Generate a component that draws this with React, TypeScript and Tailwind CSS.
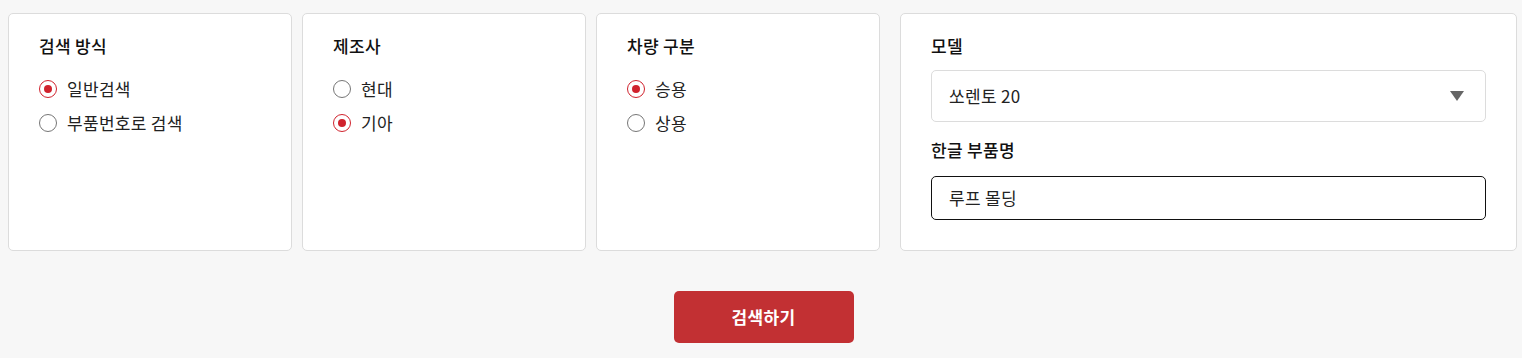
import { useState } from "react";

const font = { fontFamily: '"Noto Sans CJK KR", "Noto Sans", sans-serif' };

interface RadioGroupProps {
  title: string;
  options: string[];
  value: string;
  onChange: (v: string) => void;
}

function RadioGroup({ title, options, value, onChange }: RadioGroupProps) {
  return (
    <div className="w-[284px] shrink-0 rounded-[5px] border border-[#dcdcdc] bg-white px-[30px] pt-[20px]">
      <p className="text-[17px] leading-6 font-medium tracking-[0.3px] text-[#111]">{title}</p>
      <div className="mt-[19px] flex flex-col gap-[10px]">
        {options.map((opt) => {
          const checked = opt === value;
          return (
            <label
              key={opt}
              className="flex h-6 cursor-pointer items-center gap-[10px] text-[17px] tracking-[0.3px] text-[#222]"
              onClick={() => onChange(opt)}
            >
              <span
                className={
                  checked
                    ? "flex h-[18px] w-[18px] items-center justify-center rounded-full border-[1.5px] border-[#d0222d]"
                    : "flex h-[18px] w-[18px] items-center justify-center rounded-full border-[1.5px] border-[#767676]"
                }
              >
                {checked && <span className="h-[8px] w-[8px] rounded-full bg-[#d0222d]" />}
              </span>
              <span>{opt}</span>
            </label>
          );
        })}
      </div>
    </div>
  );
}

export default function App() {
  const [method, setMethod] = useState("일반검색");
  const [maker, setMaker] = useState("기아");
  const [type, setType] = useState("승용");

  return (
    <div className="min-h-[358px] bg-[#f7f7f7] pl-2 pr-[3px] pt-[13px]" style={font}>
      <div className="flex items-stretch">
        <div className="flex gap-[10px]">
          <RadioGroup title="검색 방식" options={["일반검색", "부품번호로 검색"]} value={method} onChange={setMethod} />
          <RadioGroup title="제조사" options={["현대", "기아"]} value={maker} onChange={setMaker} />
          <RadioGroup title="차량 구분" options={["승용", "상용"]} value={type} onChange={setType} />
        </div>
        <div className="ml-5 w-[617px] shrink-0 rounded-[5px] border border-[#dcdcdc] bg-white px-[30px] pt-[20px] pb-[30px]">
          <p className="text-[17px] leading-6 font-medium tracking-[0.3px] text-[#111]">모델</p>
          <div className="mt-3 flex h-[52px] items-center justify-between rounded-[5px] border border-[#dcdcdc] bg-white pl-[17px] pr-[21px]">
            <span className="text-[17px] tracking-[0.3px] text-[#222]">쏘렌토 20</span>
            <svg width="14" height="10" viewBox="0 0 14 10">
              <path d="M0 0h14L7 10z" fill="#666" />
            </svg>
          </div>
          <p className="mt-4 text-[17px] leading-6 font-medium tracking-[0.3px] text-[#111]">한글 부품명</p>
          <div className="mt-[14px] flex h-[44px] items-center rounded-[5px] border border-[#111] bg-white pl-[17px]">
            <span className="text-[17px] tracking-[0.3px] text-[#222]">루프 몰딩</span>
          </div>
        </div>
      </div>
      <div className="mt-10 flex justify-center">
        <button className="h-[52px] w-[180px] rounded-[5px] bg-[#c23033] text-[17px] font-semibold tracking-[0.3px] text-white">
          검색하기
        </button>
      </div>
    </div>
  );
}
